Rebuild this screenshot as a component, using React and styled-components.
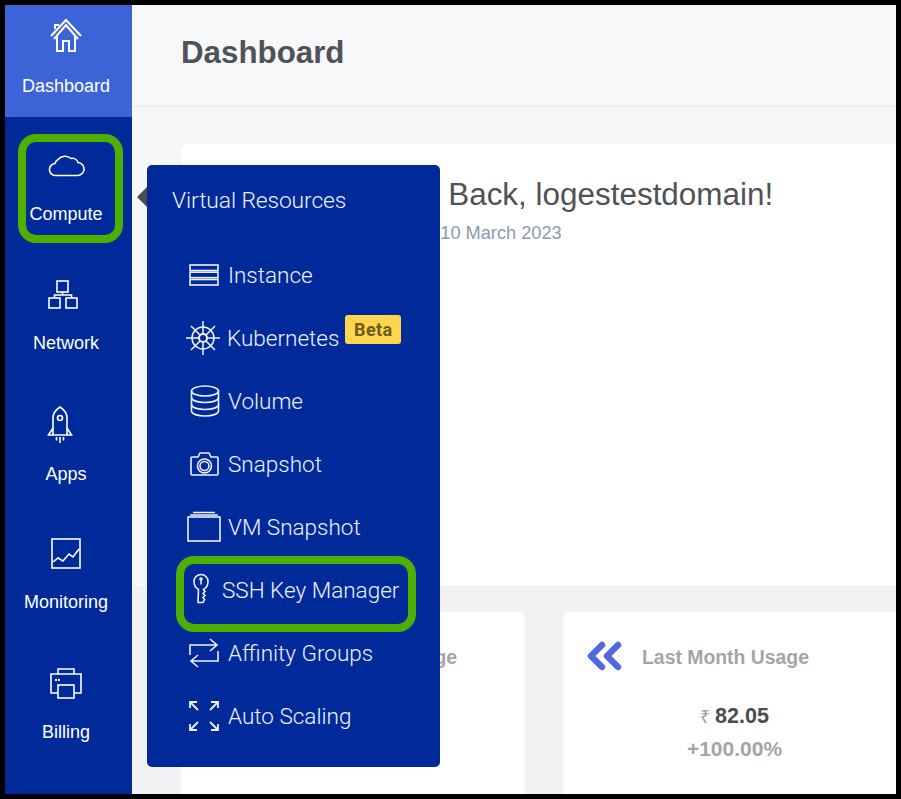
import React from "react";
import styled, { createGlobalStyle } from "styled-components";

const Global = createGlobalStyle`
  html, body { margin: 0; padding: 0; background: #000; }
  * { box-sizing: border-box; }
`;

const Frame = styled.div`
  position: relative;
  width: 891px;
  height: 789px;
  margin: 5px;
  display: flex;
  overflow: hidden;
  background: #f7f8fa;
  font-family: "Liberation Sans", Arial, sans-serif;
`;

const Sidebar = styled.nav`
  width: 127px;
  flex: none;
  background: #002a9a;
  color: #fff;
  display: flex;
  flex-direction: column;
`;

const ActiveItem = styled.div`
  height: 112px;
  background: #3c64d6;
  display: flex;
  flex-direction: column;
  align-items: center;
  padding: 10px 5px 0 0;
  margin-bottom: 28px;
`;

const NavItem = styled.div`
  height: ${(p) => p.$h}px;
  display: flex;
  flex-direction: column;
  align-items: center;
  flex: none;
  padding-right: 5px;
`;

const NavIcon = styled.div`
  height: 40px;
  display: flex;
  align-items: center;
  justify-content: center;
  margin-right: ${(p) => p.$shift || 0}px;
`;

const NavLabel = styled.div`
  font-size: 18px;
  line-height: 20px;
  margin-top: 19px;
`;

const ActiveLabel = styled(NavLabel)`
  margin-top: 21px;
`;

const Main = styled.main`
  flex: 1;
  min-width: 0;
  display: flex;
  flex-direction: column;
`;

const Header = styled.header`
  height: 102px;
  flex: none;
  border-bottom: 1px solid #e9eaee;
  padding: 30px 0 0 49px;
`;

const PageTitle = styled.h1`
  margin: 0;
  font-size: 31.3px;
  line-height: 36px;
  font-weight: 700;
  color: #4f5256;
`;

const Content = styled.div`
  flex: 1;
  padding: 37px 0 0 49px;
  display: flex;
  flex-direction: column;
  background: #f7f7fa;
`;

const WelcomeCard = styled.section`
  height: 442px;
  flex: none;
  background: #fff;
  border-radius: 6px 0 0 0;
  padding: 33px 0 0 128px;
  white-space: nowrap;
`;

const Greeting = styled.h2`
  margin: 0;
  font-size: 31.45px;
  line-height: 36px;
  font-weight: 400;
  color: #4f5256;
`;

const DateLine = styled.div`
  margin: 9px 0 0 72px;
  font-size: 18.2px;
  line-height: 22px;
  color: #8a9ab0;
`;

const StatsBand = styled.div`
  flex: 1;
  margin-left: -49px;
  padding: 26px 0 0 49px;
  background: #f2f2f5;
  display: flex;
  gap: 38px;
`;

const StatCard = styled.section`
  width: 344px;
  flex: none;
  background: #fff;
  border-radius: 6px 6px 0 0;
  padding: 24px 24px 0 23px;
`;

const StatHead = styled.div`
  display: flex;
  align-items: center;
  gap: 20px;
  height: 40px;
`;

const StatTitle = styled.div`
  font-size: 19.4px;
  font-weight: 700;
  color: #a4a5a8;
  white-space: nowrap;
  padding-top: 2px;
`;

const StatValue = styled.div`
  margin-top: 27px;
  text-align: center;
  font-size: 21.5px;
  line-height: 26px;
  font-weight: 700;
  color: #4a4c50;
`;

const Rupee = styled.span`
  font-size: 18px;
  font-weight: 400;
  color: #9a9b9e;
  margin-right: 5px;
`;

const StatDelta = styled.div`
  margin-top: 6px;
  text-align: center;
  font-size: 21px;
  line-height: 26px;
  font-weight: 700;
  color: #a4a5a8;
`;

const Popup = styled.div`
  position: absolute;
  left: 142px;
  top: 160px;
  width: 293px;
  height: 602px;
  background: #002a9a;
  border-radius: 5px;
  color: #eef1fb;
  font-family: Roboto, "Liberation Sans", sans-serif;
  font-weight: 300;
  padding: 18px 0 0 25px;
  &::before {
    content: "";
    position: absolute;
    left: -10px;
    top: 22px;
    border-style: solid;
    border-width: 10px 10px 10px 0;
    border-color: transparent #4a4d52 transparent transparent;
  }
`;

const PopupTitle = styled.div`
  font-size: 22.8px;
  line-height: 36px;
  margin-bottom: 24px;
  letter-spacing: -0.1px;
`;

const MenuList = styled.div`
  display: flex;
  flex-direction: column;
`;

const MenuItem = styled.div`
  height: 63px;
  display: flex;
  align-items: center;
  font-size: 22.5px;
  padding-left: ${(p) => p.$pad}px;
  white-space: nowrap;
`;

const MenuIcon = styled.span`
  display: flex;
  flex: none;
  width: ${(p) => p.$slot}px;
`;

const Beta = styled.span`
  align-self: flex-start;
  margin: 9px 0 0 6px;
  background: #ffd54f;
  color: #6e5c1c;
  font-family: Roboto, sans-serif;
  font-size: 18px;
  font-weight: 700;
  line-height: 29px;
  height: 29px;
  width: 56px;
  text-align: center;
  border-radius: 3px;
  letter-spacing: 0.4px;
`;

const Callout = styled.div`
  position: absolute;
  left: ${(p) => p.$x}px;
  top: ${(p) => p.$y}px;
  width: ${(p) => p.$w}px;
  height: ${(p) => p.$hh}px;
  border: 8px solid #4bb000;
  border-radius: 18px;
  pointer-events: none;
`;

const Line = ({ w = 32, h = 32, sw = 1.6, children }) => (
  <svg width={w} height={h} viewBox={`0 0 ${w} ${h}`} fill="none" stroke="currentColor" strokeWidth={sw}>
    {children}
  </svg>
);

const Home = () => (
  <Line w={34} h={34} sw={2}>
    <path d="M2 18 17 2l15 16" />
    <path d="M5 21 17 7l12 14" />
    <path d="M8 18v15h6V23h6v10h6V18" />
    <path d="M6 11V7h4" />
  </Line>
);
const Cloud = () => (
  <Line w={38} h={24}>
    <path d="M9 22.5h21a6.5 6.5 0 0 0 1-13 6 6 0 0 0-7-4 9 9 0 0 0-13 1 6 6 0 0 0-3 4A6 6 0 0 0 9 22.5Z" />
  </Line>
);
const NetworkIcon = () => (
  <Line w={30} h={29}>
    <rect x="9" y="1" width="11" height="11" />
    <rect x="1" y="18" width="11" height="10" />
    <rect x="18" y="18" width="11" height="10" />
    <path d="M14.5 12v3M6.5 18v-3h17v3" />
  </Line>
);
const Rocket = () => (
  <Line w={26} h={38}>
    <path d="M6 29V12C6 7 10 3 13 1c3 2 7 6 7 11v17Z" />
    <circle cx="13" cy="12" r="2.5" />
    <path d="M6 22 1.5 29H6M20 22l4.5 7H20" />
    <path d="M13 31v6M9.5 31v3.5M16.5 31v3.5" />
  </Line>
);
const Chart = () => (
  <Line w={30} h={31}>
    <rect x="1" y="1" width="28" height="29" />
    <path d="M2 24l5-4 5 3 6-7 4 3 6-8" />
  </Line>
);
const Printer = () => (
  <Line w={32} h={31}>
    <path d="M8 6V1h16v5" />
    <path d="M8 25H1V6h30v19h-7" />
    <rect x="8" y="17" width="16" height="13" />
    <path d="M5 12h2M8 12h2" strokeWidth="2" />
  </Line>
);
const Stack = () => (
  <Line w={30} h={22}>
    <rect x="1" y="1" width="28" height="5.5" />
    <rect x="1" y="8.2" width="28" height="5.5" />
    <rect x="1" y="15.5" width="28" height="5.5" />
  </Line>
);
const Wheel = () => (
  <Line w={34} h={36} sw={1.5}>
    <circle cx="17" cy="18" r="11" />
    <circle cx="17" cy="18" r="4" strokeWidth="2" />
    <path d="M17 1v13M17 22v13M0 18h13M21 18h13M5 6l9 9M20 21l9 9M29 6l-9 9M14 21l-9 9" />
  </Line>
);
const Db = () => (
  <Line w={30} h={32}>
    <ellipse cx="15" cy="6" rx="13.5" ry="5" />
    <path d="M1.5 6v20c0 3 6 5 13.5 5s13.500-2 13.500-5V6" />
    <path d="M1.5 12.5c0 3 6 5 13.5 5s13.500-2 13.500-5M1.5 19.5c0 3 6 5 13.5 5s13.500-2 13.500-5" />
  </Line>
);
const Camera = () => (
  <Line w={31} h={25}>
    <path d="M3 6h6l2-4h9l2 4h6a1 1 0 0 1 1 1v16a1 1 0 0 1-1 1H3a1 1 0 0 1-1-1V7a1 1 0 0 1 1-1Z" />
    <circle cx="15.5" cy="15" r="7" />
    <circle cx="15.5" cy="15" r="4.5" />
  </Line>
);
const Frames = () => (
  <Line w={34} h={31}>
    <rect x="1" y="6" width="32" height="24" />
    <path d="M3 4h28M6 1.5h22" />
  </Line>
);
const Key = () => (
  <Line w={16} h={33}>
    <path d="M5.5 16.5C3 15 1 12.5 1 8.5a7 7 0 0 1 14 0c0 4-2 6.5-4.5 8l1.5 2-2 2 2 2-2 2 1.500 2-1.500 3h-5Z" />
    <circle cx="8" cy="6" r="1" fill="currentColor" />
    <path d="M8 7v4.5" />
  </Line>
);
const Swap = () => (
  <Line w={30} h={30}>
    <path d="M1 17V7h27M21 1l7 6-7 6" />
    <path d="M29 13v10H2M9 17l-7 6 7 6" />
  </Line>
);
const Expand = () => (
  <Line w={30} h={32} sw={1.8}>
    <path d="M1 8V2h7M1 2l8 8M29 8V2h-7M29 2l-8 8M1 24v6h7M1 30l8-8M29 24v6h-7M29 30l-8-8" />
  </Line>
);
const Chevrons = () => (
  <svg width="36" height="30" viewBox="0 0 36 30" fill="none" stroke="#5068e2" strokeWidth="6.5" strokeLinecap="round" strokeLinejoin="round">
    <path d="M16 4 5 15l11 11M32 4 21 15l11 11" />
  </svg>
);

const navItems = [
  [Cloud, "Compute", 129, 0],
  [NetworkIcon, "Network", 131, 7],
  [Rocket, "Apps", 128, 12],
  [Chart, "Monitoring", 130, 0],
  [Printer, "Billing", 120, 0],
];

const menu = [
  [Stack, "Instance", 17, 39],
  [Wheel, "Kubernetes", 14, 41, true],
  [Db, "Volume", 18, 38],
  [Camera, "Snapshot", 17, 39],
  [Frames, "VM Snapshot", 15, 41],
  [Key, "SSH Key Manager", 21, 29],
  [Swap, "Affinity Groups", 17, 39],
  [Expand, "Auto Scaling", 17, 39],
];

export default function App() {
  return (
    <>
      <Global />
      <Frame>
        <Sidebar>
          <ActiveItem>
            <NavIcon><Home /></NavIcon>
            <ActiveLabel>Dashboard</ActiveLabel>
          </ActiveItem>
          {navItems.map(([Icon, label, h, shift]) => (
            <NavItem key={label} $h={h}>
              <NavIcon $shift={shift}><Icon /></NavIcon>
              <NavLabel>{label}</NavLabel>
            </NavItem>
          ))}
        </Sidebar>
        <Main>
          <Header><PageTitle>Dashboard</PageTitle></Header>
          <Content>
            <WelcomeCard>
              <Greeting>Welcome Back, logestestdomain!</Greeting>
              <DateLine>Friday, 10 March 2023</DateLine>
            </WelcomeCard>
            <StatsBand>
              <StatCard>
                <StatHead><Chevrons /><StatTitle>Current Month Usage</StatTitle></StatHead>
              </StatCard>
              <StatCard>
                <StatHead><Chevrons /><StatTitle>Last Month Usage</StatTitle></StatHead>
                <StatValue><Rupee>₹</Rupee>82.05</StatValue>
                <StatDelta>+100.00%</StatDelta>
              </StatCard>
            </StatsBand>
          </Content>
        </Main>
        <Popup>
          <PopupTitle>Virtual Resources</PopupTitle>
          <MenuList>
            {menu.map(([Icon, label, pad, slot, beta]) => (
              <MenuItem key={label} $pad={pad}>
                <MenuIcon $slot={slot}><Icon /></MenuIcon>
                {label}
                {beta && <Beta>Beta</Beta>}
              </MenuItem>
            ))}
          </MenuList>
        </Popup>
        <Callout $x={13} $y={129} $w={105} $hh={109} />
        <Callout $x={171} $y={551} $w={240} $hh={76} />
      </Frame>
    </>
  );
}
